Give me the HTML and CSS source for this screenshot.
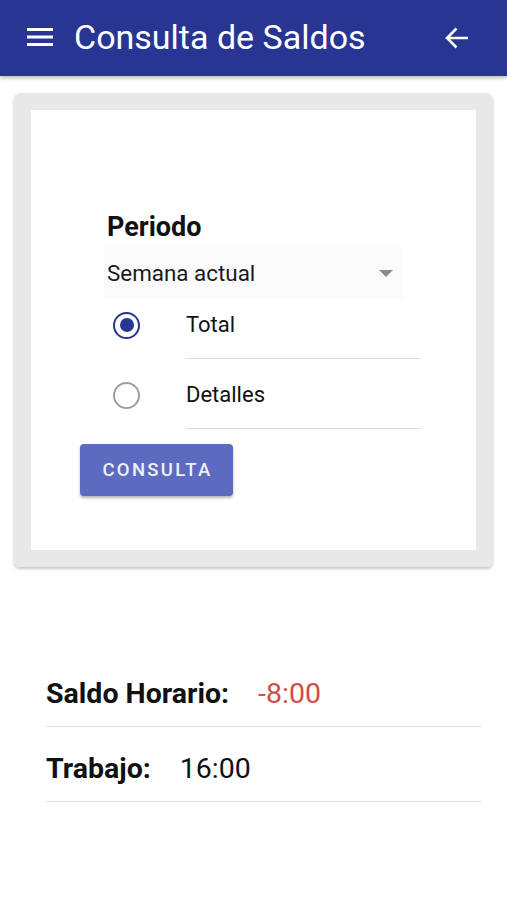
FILE: index.html
```html
<!DOCTYPE html>
<html lang="es">
<head>
<meta charset="utf-8">
<title>Consulta de Saldos</title>
<link rel="stylesheet" href="styles.css">
</head>
<body>
<header class="appbar">
  <svg class="menu-icon" width="26" height="20" viewBox="0 0 26 20" aria-hidden="true">
    <rect x="0" y="1" width="26" height="3" fill="#fff"/>
    <rect x="0" y="8.5" width="26" height="3" fill="#fff"/>
    <rect x="0" y="16" width="26" height="3" fill="#fff"/>
  </svg>
  <h1 class="title">Consulta de Saldos</h1>
  <svg class="back-icon" width="24" height="22" viewBox="0 0 24 22" aria-hidden="true">
    <path d="M23 11H2.5M11.5 1.5L2 11l9.5 9.5" fill="none" stroke="#fff" stroke-width="2.6"/>
  </svg>
</header>

<main class="content">
  <section class="card">
    <div class="card-inner">
      <h2 class="field-label">Periodo</h2>
      <div class="select">
        <span class="select-value">Semana actual</span>
        <span class="select-caret"></span>
      </div>
      <ul class="radio-list">
        <li class="radio-row">
          <span class="radio radio-on"><span class="radio-dot"></span></span>
          <span class="radio-label">Total</span>
        </li>
        <li class="radio-row">
          <span class="radio"></span>
          <span class="radio-label">Detalles</span>
        </li>
      </ul>
      <button class="btn">CONSULTA</button>
    </div>
  </section>

  <section class="results">
    <div class="result-row">
      <span class="result-key">Saldo Horario:</span>
      <span class="result-val negative">-8:00</span>
    </div>
    <div class="result-row">
      <span class="result-key">Trabajo:</span>
      <span class="result-val">16:00</span>
    </div>
  </section>
</main>
</body>
</html>
```

FILE: styles.css
```css
* { box-sizing: border-box; }

html, body {
  margin: 0;
  padding: 0;
  background: #ffffff;
  font-family: Roboto, "Noto Sans", "Liberation Sans", sans-serif;
  color: #111;
}

.appbar {
  height: 76px;
  background: #283593;
  display: flex;
  align-items: center;
  padding: 0 38px 0 27px;
  box-shadow: 0 2px 4px rgba(0, 0, 0, 0.28);
  position: relative;
  z-index: 1;
}

.menu-icon { flex: none; margin-right: 21px; margin-top: -2px; }

.title {
  margin: 0;
  color: #fff;
  font-weight: 400;
  font-size: 34px;
  line-height: 40px;
  margin-top: -2px;
}

.back-icon { margin-left: auto; flex: none; }

.content {
  padding: 17px 14px 0;
}

.card {
  border: 17px solid #e8e8e8;
  border-radius: 6px;
  box-shadow: 0 2px 3px rgba(0, 0, 0, 0.22);
  height: 474px;
}

.card-inner {
  background: #fff;
  height: 100%;
  padding: 104px 0 0 76px;
}

.field-label {
  margin: 0;
  font-size: 27px;
  font-weight: 700;
  line-height: 26px;
}

.select {
  margin: 7px 0 0 -3px;
  width: 299px;
  height: 52px;
  background: #fafafa;
  border-radius: 4px;
  display: flex;
  align-items: center;
  padding: 0 5px 0 3px;
}

.select-value {
  font-size: 22.4px;
  color: #1a1a1a;
}

.select-caret {
  margin-left: auto;
  margin-right: 5px;
  width: 0;
  height: 0;
  border-left: 7px solid transparent;
  border-right: 7px solid transparent;
  border-top: 7px solid #8a8a8a;
}

.radio-list {
  list-style: none;
  margin: -10px 0 0;
  padding: 0;
}

.radio-row {
  display: flex;
  align-items: center;
  height: 70px;
}

.radio {
  flex: none;
  width: 27px;
  height: 27px;
  margin-left: 6px;
  margin-right: 46px;
  border: 2.5px solid #9e9e9e;
  border-radius: 50%;
  display: flex;
  align-items: center;
  justify-content: center;
  margin-top: 2px;
}

.radio-on { border-color: #283593; }

.radio-dot {
  width: 14px;
  height: 14px;
  border-radius: 50%;
  background: #283593;
}

.radio-label {
  width: 235px;
  height: 70px;
  padding-top: 24px;
  line-height: 24px;
  font-size: 22px;
  border-bottom: 1px solid #dcdcdc;
}

.btn {
  margin: 15px 0 0 -27px;
  width: 153px;
  height: 52px;
  border: none;
  border-radius: 4px;
  background: #5c6bc0;
  color: #eef0fa;
  font-family: Roboto, "Noto Sans", "Liberation Sans", sans-serif;
  font-size: 18.5px;
  font-weight: 500;
  letter-spacing: 2.3px;
  box-shadow: 0 2px 3px rgba(0, 0, 0, 0.3);
  padding: 0 0 0 2px;
}

.results {
  margin: 85px 12px 0 32px;
}

.result-row {
  display: flex;
  align-items: center;
  height: 75px;
  border-bottom: 1px solid #dedede;
  padding-top: 8px;
}

.result-key {
  font-size: 28.5px;
  font-weight: 700;
}

.result-row:first-child .result-key { margin-right: 29px; }
.result-row:nth-child(2) .result-key { margin-right: 29px; }

.result-val {
  font-size: 28.5px;
}

.negative { color: #d14b4b; }
```
